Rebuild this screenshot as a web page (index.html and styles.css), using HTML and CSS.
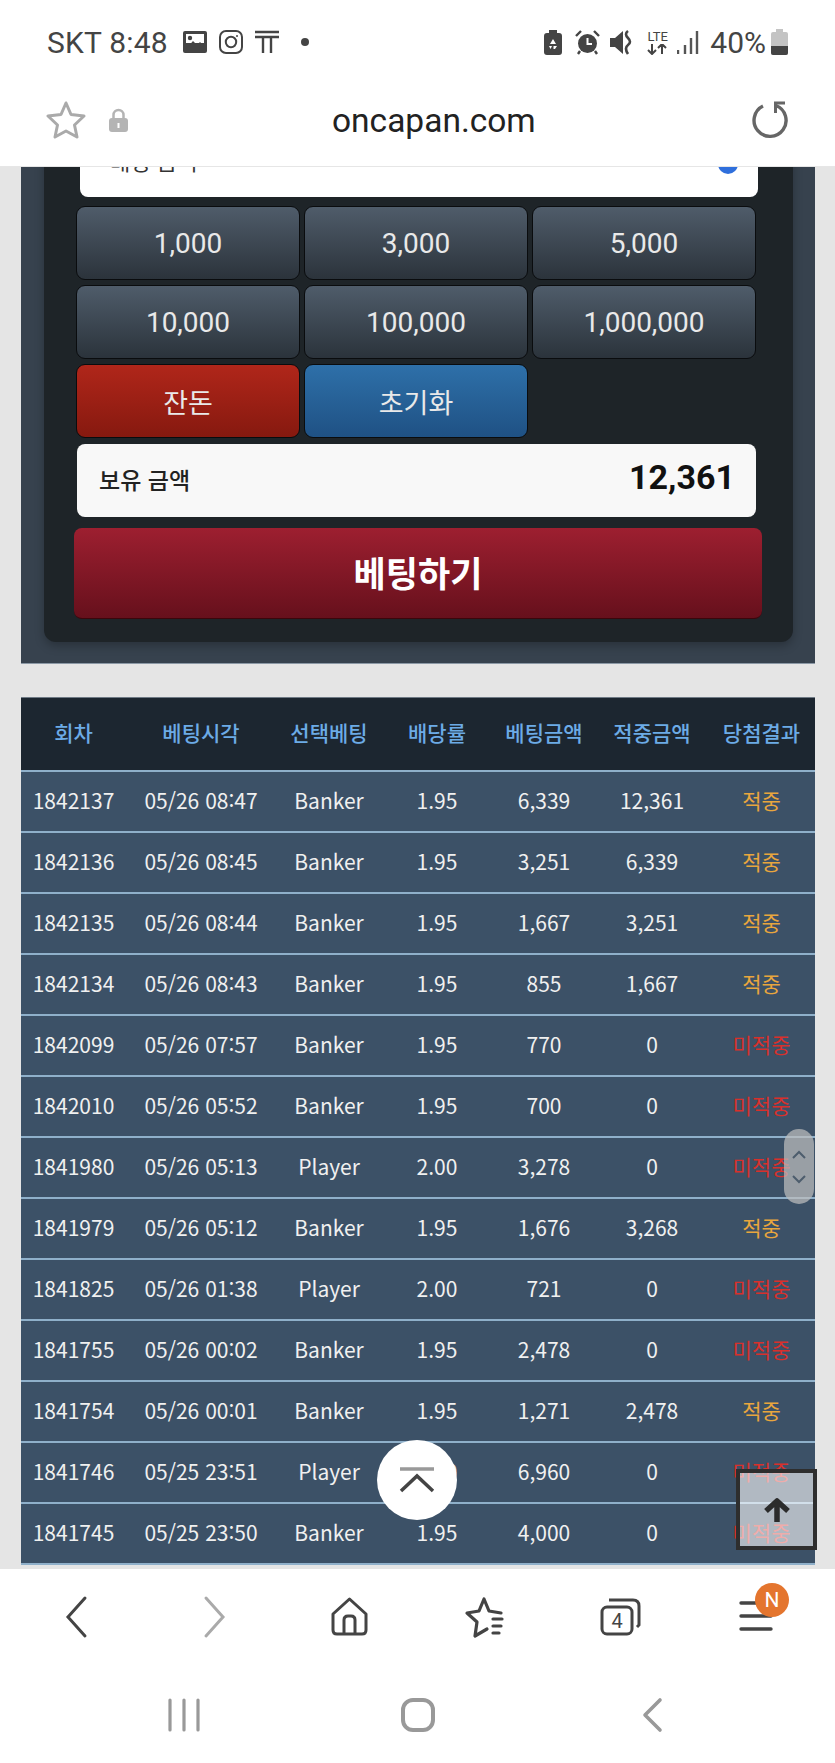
FILE: index.html
```html
<!DOCTYPE html>
<html lang="ko">
<head>
    <meta charset="UTF-8">
    <meta name="viewport" content="width=device-width, initial-scale=1.0">
    <title>oncapan.com</title>
    <link rel="stylesheet" href="styles.css">
</head>
<body>
    <div class="phone">
        <!-- Status bar -->
        <div class="status-bar">
            <div class="status-left">
                <span class="status-text carrier">SKT 8:48</span>
                <svg class="st-icon" width="24" height="24" viewBox="0 0 24 24"><rect x="0" y="1" width="24" height="22" rx="2" fill="#444"/><rect x="3" y="4" width="18" height="9" fill="#fff"/><circle cx="7" cy="8" r="2.2" fill="#444"/><path d="M3 19 L10 11 L14 15 L17 12 L21 16 V20 H3 Z" fill="#444"/></svg>
                <svg class="st-icon" width="24" height="24" viewBox="0 0 24 24" fill="none" stroke="#444" stroke-width="2"><rect x="1" y="1" width="22" height="22" rx="6"/><circle cx="12" cy="12" r="5.2"/><circle cx="18" cy="6" r="1" fill="#444" stroke="none"/></svg>
                <svg class="st-icon" width="24" height="24" viewBox="0 0 24 24" fill="none" stroke="#444" stroke-width="2.4"><path d="M0 2 H24 M0 7 H24 M8 7 V23 M16 7 V23"/></svg>
                <span class="st-dot"></span>
            </div>
            <div class="status-right">
                <svg width="18" height="25" viewBox="0 0 18 25"><path d="M5 0 H13 V3 H15 Q18 3 18 6 V22 Q18 25 15 25 H3 Q0 25 0 22 V6 Q0 3 3 3 H5 Z" fill="#444"/><path d="M9 9 L12 14 H6 Z M5 16 H8 L6.5 19 Z M13 16 L11 19 H9.5 V16 Z" fill="#fff"/></svg>
                <svg class="alarm" width="25" height="25" viewBox="0 0 25 25"><circle cx="12.5" cy="13.5" r="9.5" fill="#444"/><path d="M12.5 8 V14 H17" fill="none" stroke="#fff" stroke-width="2"/><path d="M1 6 L6 1 M24 6 L19 1 M5 21 L3 24 M20 21 L22 24" stroke="#444" stroke-width="2.4"/></svg>
                <svg width="23" height="25" viewBox="0 0 23 25"><path d="M0 8 H5 L13 1 V24 L5 17 H0 Z" fill="#444"/><path d="M18 1 Q14 4 18 8 Q22 12 18 15 Q14 18 18 24" fill="none" stroke="#444" stroke-width="2.600"/></svg>
                <div class="lte">
                    <span class="lte-text">LTE</span>
                    <svg width="25" height="11" viewBox="0 0 25 11"><path d="M7 0 V10 M3 6 L7 10 L11 6 M17 10 V0 M13 4 L17 0 L21 4" fill="none" stroke="#444" stroke-width="2"/></svg>
                </div>
                <svg class="signal" width="22" height="25" viewBox="0 0 22 25"><path d="M1 20 V24 M8 15 V24 M14 8 V24 M20 1 V24" stroke="#555" stroke-width="2.4"/></svg>
                <span class="status-text battery-text">40%</span>
                <svg class="battery" width="17" height="26" viewBox="0 0 17 26"><path d="M5 0 H12 V3 H15 Q17 3 17 5 V24 Q17 26 15 26 H2 Q0 26 0 24 V5 Q0 3 2 3 H5 Z" fill="#c4c4c4"/><path d="M0 17 H17 V24 Q17 26 15 26 H2 Q0 26 0 24 Z" fill="#444"/></svg>
            </div>
        </div>

        <!-- Address bar -->
        <div class="address-bar">
            <svg width="40" height="38" viewBox="0 0 40 38" fill="none" stroke="#aaa" stroke-width="3" stroke-linejoin="round"><path d="M20 2 L25 13.500 L38 15 L28.500 24 L31 36 L20 30 L9 36 L11.500 24 L2 15 L15 13.500 Z"/></svg>
            <svg class="lock" width="19" height="24" viewBox="0 0 19 24"><path d="M4.500 11 V7 A5 5 0 0 1 14.500 7 V11" fill="none" stroke="#b4b4b4" stroke-width="2.500"/><rect x="0" y="10" width="19" height="14" rx="3" fill="#b4b4b4"/><rect x="8.500" y="15" width="2" height="5" fill="#fff"/></svg>
            <span class="url">oncapan.com</span>
            <svg class="reload" width="38" height="38" viewBox="0 0 38 38" fill="none" stroke="#666" stroke-width="3.400"><path d="M13 5 A16 16 0 1 0 26 4.500"/><path d="M35 2 H25.500 V12" stroke-width="3"/></svg>
        </div>

        <!-- Page content -->
        <main class="viewport">
            <div class="scroll-page">
                <section class="bet-panel">
                    <div class="bet-inner">
                        <div class="amount-input">
                            <span>배팅 금액</span>
                            <span class="input-dot"></span>
                        </div>
                        <div class="chip-grid">
                            <button class="chip">1,000</button>
                            <button class="chip">3,000</button>
                            <button class="chip">5,000</button>
                            <button class="chip">10,000</button>
                            <button class="chip">100,000</button>
                            <button class="chip">1,000,000</button>
                            <button class="chip chip-red">잔돈</button>
                            <button class="chip chip-blue">초기화</button>
                        </div>
                        <div class="balance">
                            <span class="balance-label">보유 금액</span>
                            <span class="balance-value">12,361</span>
                        </div>
                        <button class="bet-button">베팅하기</button>
                    </div>
                </section>

                <table class="history">
                    <colgroup>
                        <col class="c-round"><col class="c-time"><col class="c-pick"><col class="c-odds"><col class="c-bet"><col class="c-win"><col class="c-result">
                    </colgroup>
                    <thead>
                        <tr><th>회차</th><th>베팅시각</th><th>선택베팅</th><th>배당률</th><th>베팅금액</th><th>적중금액</th><th>당첨결과</th></tr>
                    </thead>
                    <tbody>
                        <tr><td>1842137</td><td>05/26 08:47</td><td>Banker</td><td>1.95</td><td>6,339</td><td>12,361</td><td class="hit">적중</td></tr>
                        <tr><td>1842136</td><td>05/26 08:45</td><td>Banker</td><td>1.95</td><td>3,251</td><td>6,339</td><td class="hit">적중</td></tr>
                        <tr><td>1842135</td><td>05/26 08:44</td><td>Banker</td><td>1.95</td><td>1,667</td><td>3,251</td><td class="hit">적중</td></tr>
                        <tr><td>1842134</td><td>05/26 08:43</td><td>Banker</td><td>1.95</td><td>855</td><td>1,667</td><td class="hit">적중</td></tr>
                        <tr><td>1842099</td><td>05/26 07:57</td><td>Banker</td><td>1.95</td><td>770</td><td>0</td><td class="miss">미적중</td></tr>
                        <tr><td>1842010</td><td>05/26 05:52</td><td>Banker</td><td>1.95</td><td>700</td><td>0</td><td class="miss">미적중</td></tr>
                        <tr><td>1841980</td><td>05/26 05:13</td><td>Player</td><td>2.00</td><td>3,278</td><td>0</td><td class="miss">미적중</td></tr>
                        <tr><td>1841979</td><td>05/26 05:12</td><td>Banker</td><td>1.95</td><td>1,676</td><td>3,268</td><td class="hit">적중</td></tr>
                        <tr><td>1841825</td><td>05/26 01:38</td><td>Player</td><td>2.00</td><td>721</td><td>0</td><td class="miss">미적중</td></tr>
                        <tr><td>1841755</td><td>05/26 00:02</td><td>Banker</td><td>1.95</td><td>2,478</td><td>0</td><td class="miss">미적중</td></tr>
                        <tr><td>1841754</td><td>05/26 00:01</td><td>Banker</td><td>1.95</td><td>1,271</td><td>2,478</td><td class="hit">적중</td></tr>
                        <tr><td>1841746</td><td>05/25 23:51</td><td>Player</td><td>2.00</td><td>6,960</td><td>0</td><td class="miss">미적중</td></tr>
                        <tr><td>1841745</td><td>05/25 23:50</td><td>Banker</td><td>1.95</td><td>4,000</td><td>0</td><td class="miss">미적중</td></tr>
                    </tbody>
                </table>
            </div>

            <!-- Floating controls -->
            <div class="scroll-thumb">
                <svg width="16" height="10" viewBox="0 0 16 10" fill="none" stroke="#4d5d6d" stroke-width="2"><path d="M2 8 L8 2 L14 8"/></svg>
                <svg width="16" height="10" viewBox="0 0 16 10" fill="none" stroke="#4d5d6d" stroke-width="2"><path d="M2 2 L8 8 L14 2"/></svg>
            </div>
            <div class="to-top-round">
                <svg width="36" height="28" viewBox="0 0 36 28" fill="none" stroke-width="3.500"><path d="M1 3 H35" stroke="#999"/><path d="M2 25 L18 10 L34 25" stroke="#444"/></svg>
            </div>
            <div class="to-top-square">
                <svg width="28" height="26" viewBox="0 0 28 26" fill="none" stroke="#2b2b2b" stroke-width="5.500" stroke-linejoin="round"><path d="M3 14 L14 4 L25 14 M14 5 V25"/></svg>
            </div>
        </main>

        <!-- Browser toolbar -->
        <nav class="browser-nav">
            <svg width="50" height="50" viewBox="0 0 50 50" fill="none" stroke="#444" stroke-width="3" stroke-linecap="round"><path d="M34 6 L17 25 L34 44"/></svg>
            <svg width="50" height="50" viewBox="0 0 50 50" fill="none" stroke="#aaa" stroke-width="3" stroke-linecap="round"><path d="M19 6 L36 25 L19 44"/></svg>
            <svg width="50" height="50" viewBox="0 0 50 50" fill="none" stroke="#444" stroke-width="3" stroke-linejoin="round"><path d="M26.500 7 L43 22 V38 Q43 42 39 42 H14 Q10 42 10 38 V22 Z"/><path d="M21 42 V28 Q21 24 25 24 H28 Q32 24 32 28 V42"/></svg>
            <svg width="50" height="50" viewBox="0 0 50 50" fill="none" stroke="#444" stroke-width="3.200" stroke-linejoin="round" stroke-linecap="round"><path d="M28 37 L16 44 L18 30 L8 21 L20 19 L25 7 L30 19 L42 21"/><path d="M34 27 H43 M34 34 H42 M34 41 H40"/></svg>
            <svg width="50" height="50" viewBox="0 0 50 50" fill="none" stroke="#444" stroke-width="3"><rect x="7" y="15" width="30" height="27" rx="5"/><path d="M14 8 H38 Q44 8 44 14 V33 L42 35"/><text class="tab-count" x="22" y="36" text-anchor="middle">4</text></svg>
            <div class="menu-cell">
                <svg width="50" height="50" viewBox="0 0 50 50" stroke="#444" stroke-width="3.400" stroke-linecap="round"><path d="M10 11 H40 M10 24 H40 M10 37 H40"/></svg>
                <span class="badge">N</span>
            </div>
        </nav>

        <!-- Android nav -->
        <div class="system-nav">
            <svg width="50" height="36" viewBox="0 0 50 36" stroke="#999" stroke-width="3.200" stroke-linecap="round"><path d="M11 3 V33 M25 3 V33 M39 3 V33"/></svg>
            <svg width="50" height="36" viewBox="0 0 50 36" fill="none" stroke="#999" stroke-width="4"><rect x="10" y="3" width="30" height="30" rx="10"/></svg>
            <svg width="50" height="36" viewBox="0 0 50 36" fill="none" stroke="#999" stroke-width="3.600" stroke-linecap="round" stroke-linejoin="round"><path d="M33 3 L18 18 L33 33"/></svg>
        </div>
    </div>
</body>
</html>
```

FILE: styles.css
```css
* {
    box-sizing: border-box;
}

body {
    margin: 0;
    background: #e5e5e5;
    font-family: Roboto, "Noto Sans CJK KR", sans-serif;
}

.phone {
    width: 835px;
    height: 1763px;
    display: flex;
    flex-direction: column;
    overflow: hidden;
    background: #fff;
}

/* Status bar */
.status-bar {
    height: 84px;
    padding: 0 47px;
    display: flex;
    align-items: center;
    justify-content: space-between;
    flex-shrink: 0;
}

.status-left,
.status-right {
    display: flex;
    align-items: center;
}

.status-left {
    gap: 12px;
}

.status-right {
    gap: 10px;
}

.status-text {
    font-size: 30px;
    color: #444;
}

.carrier {
    margin-right: 3px;
    letter-spacing: 0.2px;
}

.st-dot {
    width: 8px;
    height: 8px;
    margin-left: 10px;
    border-radius: 50%;
    background: #444;
}

.alarm {
    margin-left: 3px;
}

.lte {
    width: 25px;
    margin-left: 2px;
    display: flex;
    flex-direction: column;
    align-items: center;
    gap: 1px;
}

.lte-text {
    font-size: 13px;
    line-height: 13px;
    color: #444;
}

.signal {
    margin-left: -3px;
}

.battery-text {
    margin-left: 1px;
}

.battery {
    margin-left: -5px;
}

/* Address bar */
.address-bar {
    height: 83px;
    padding: 0 47px 10px 46px;
    display: flex;
    align-items: center;
    flex-shrink: 0;
    border-bottom: 1px solid #e6e6e6;
}

.lock {
    margin-left: 23px;
}

.url {
    margin-left: 204px;
    font-size: 33.5px;
    color: #222;
}

.reload {
    margin-left: auto;
}

/* Page area */
.viewport {
    position: relative;
    flex: none;
    height: 1402px;
    overflow: hidden;
    background: #e5e5e5;
}

.scroll-page {
    margin-top: -31px;
}

.bet-panel {
    margin: 0 20px 0 21px;
    padding: 0 22px 21px 23px;
    background: #37424e;
    border-bottom: 1px solid #8b98a5;
}

.bet-inner {
    padding-bottom: 23px;
    background: #1e2428;
    border-radius: 0 0 12px 12px;
    box-shadow: 0 4px 10px rgba(0, 0, 0, 0.25);
}

.amount-input {
    width: 678px;
    height: 61px;
    margin-left: 36px;
    padding: 0 20px 14px 30px;
    display: flex;
    align-items: center;
    justify-content: space-between;
    background: #fff;
    border-radius: 0 0 8px 8px;
    font-family: "Noto Sans CJK KR", sans-serif;
    font-size: 22px;
    color: #333;
}

.input-dot {
    width: 20px;
    height: 20px;
    margin-top: 8px;
    border-radius: 50%;
    background: #2f6fdc;
}

.chip-grid {
    width: 680px;
    margin: 9px 0 0 32px;
    display: grid;
    grid-template-columns: repeat(3, 224px);
    grid-auto-rows: 74px;
    gap: 5px 4px;
}

.chip {
    padding: 0;
    border: 1px solid #0a0c0e;
    border-radius: 9px;
    background: linear-gradient(#4f5c6a, #2b333b);
    font-family: Roboto, "Noto Sans CJK KR", sans-serif;
    font-size: 28px;
    color: #e9e9e9;
}

.chip-red {
    background: linear-gradient(#b0261a, #86190f);
    font-family: "Noto Sans CJK KR", sans-serif;
    font-size: 27px;
}

.chip-blue {
    background: linear-gradient(#2e70a9, #1f5184);
    font-family: "Noto Sans CJK KR", sans-serif;
    font-size: 27px;
}

.balance {
    width: 679px;
    height: 73px;
    margin: 6px 0 0 33px;
    padding: 0 21px 0 22px;
    display: flex;
    align-items: center;
    justify-content: space-between;
    background: #f8f8f8;
    border-radius: 8px;
}

.balance-label {
    margin-top: -4px;
    font-family: "Noto Sans CJK KR", sans-serif;
    font-size: 23px;
    font-weight: 500;
    color: #222;
}

.balance-value {
    margin-top: -8px;
    font-size: 34px;
    font-weight: 700;
    color: #111;
}

.bet-button {
    display: block;
    width: 688px;
    height: 91px;
    margin: 11px 0 0 30px;
    padding: 0 0 4px;
    border: none;
    border-bottom: 1px solid #3b060c;
    border-radius: 8px;
    background: linear-gradient(#9d1f30, #66101c);
    font-family: "Noto Sans CJK KR", sans-serif;
    font-size: 35px;
    font-weight: 700;
    color: #fff;
}

/* History table */
.history {
    width: 794px;
    margin: 33px 0 0 21px;
    border-collapse: collapse;
    table-layout: fixed;
    font-family: "Noto Sans CJK KR", sans-serif;
}

.c-round { width: 105px; }
.c-time { width: 150px; }
.c-pick { width: 106px; }
.c-odds { width: 110px; }
.c-bet { width: 104px; }
.c-win { width: 112px; }
.c-result { width: 107px; }

.history th {
    height: 73px;
    padding: 0 0 4px;
    background: #1c2630;
    border-top: 1px solid #6f7a85;
    border-bottom: 2px solid #8fb0ca;
    font-size: 21px;
    font-weight: 500;
    color: #6cabe6;
}

.history td {
    height: 61px;
    padding: 0 0 2px;
    background: #3c5167;
    border-bottom: 2px solid #8fb0ca;
    text-align: center;
    font-size: 21px;
    color: #f0f0f0;
}

.history td.hit {
    color: #e9a63d;
}

.history td.miss {
    color: #d8302c;
}

/* Floating controls */
.scroll-thumb {
    position: absolute;
    left: 784px;
    top: 962px;
    width: 30px;
    height: 75px;
    display: flex;
    flex-direction: column;
    align-items: center;
    justify-content: center;
    gap: 14px;
    border-radius: 15px;
    background: rgba(190, 190, 190, 0.72);
}

.to-top-round {
    position: absolute;
    left: 377px;
    top: 1273px;
    width: 80px;
    height: 80px;
    display: flex;
    align-items: center;
    justify-content: center;
    border-radius: 50%;
    background: #fff;
}

.to-top-square {
    position: absolute;
    left: 736px;
    top: 1302px;
    width: 81px;
    height: 81px;
    display: flex;
    align-items: center;
    justify-content: center;
    border: 4px solid #2e2e2e;
    background: rgba(255, 255, 255, 0.6);
}

/* Browser toolbar */
.browser-nav {
    flex: none;
    height: 115px;
    padding: 23px 0 0 8px;
    display: grid;
    grid-template-columns: repeat(6, 136px);
    justify-items: center;
    align-items: start;
    background: #fff;
}

.tab-count {
    font-family: Roboto, sans-serif;
    font-size: 20px;
    fill: #444;
    stroke: none;
}

.menu-cell {
    position: relative;
    width: 50px;
    height: 50px;
}

.badge {
    position: absolute;
    left: 24px;
    top: -9px;
    width: 34px;
    height: 34px;
    display: flex;
    align-items: center;
    justify-content: center;
    border-radius: 50%;
    background: #e4752e;
    font-size: 21px;
    color: #fff;
}

/* Android nav */
.system-nav {
    flex: none;
    height: 79px;
    padding: 13px 0 0 67px;
    display: grid;
    grid-template-columns: repeat(3, 234px);
    justify-items: center;
    align-items: start;
    background: #fff;
}
```
